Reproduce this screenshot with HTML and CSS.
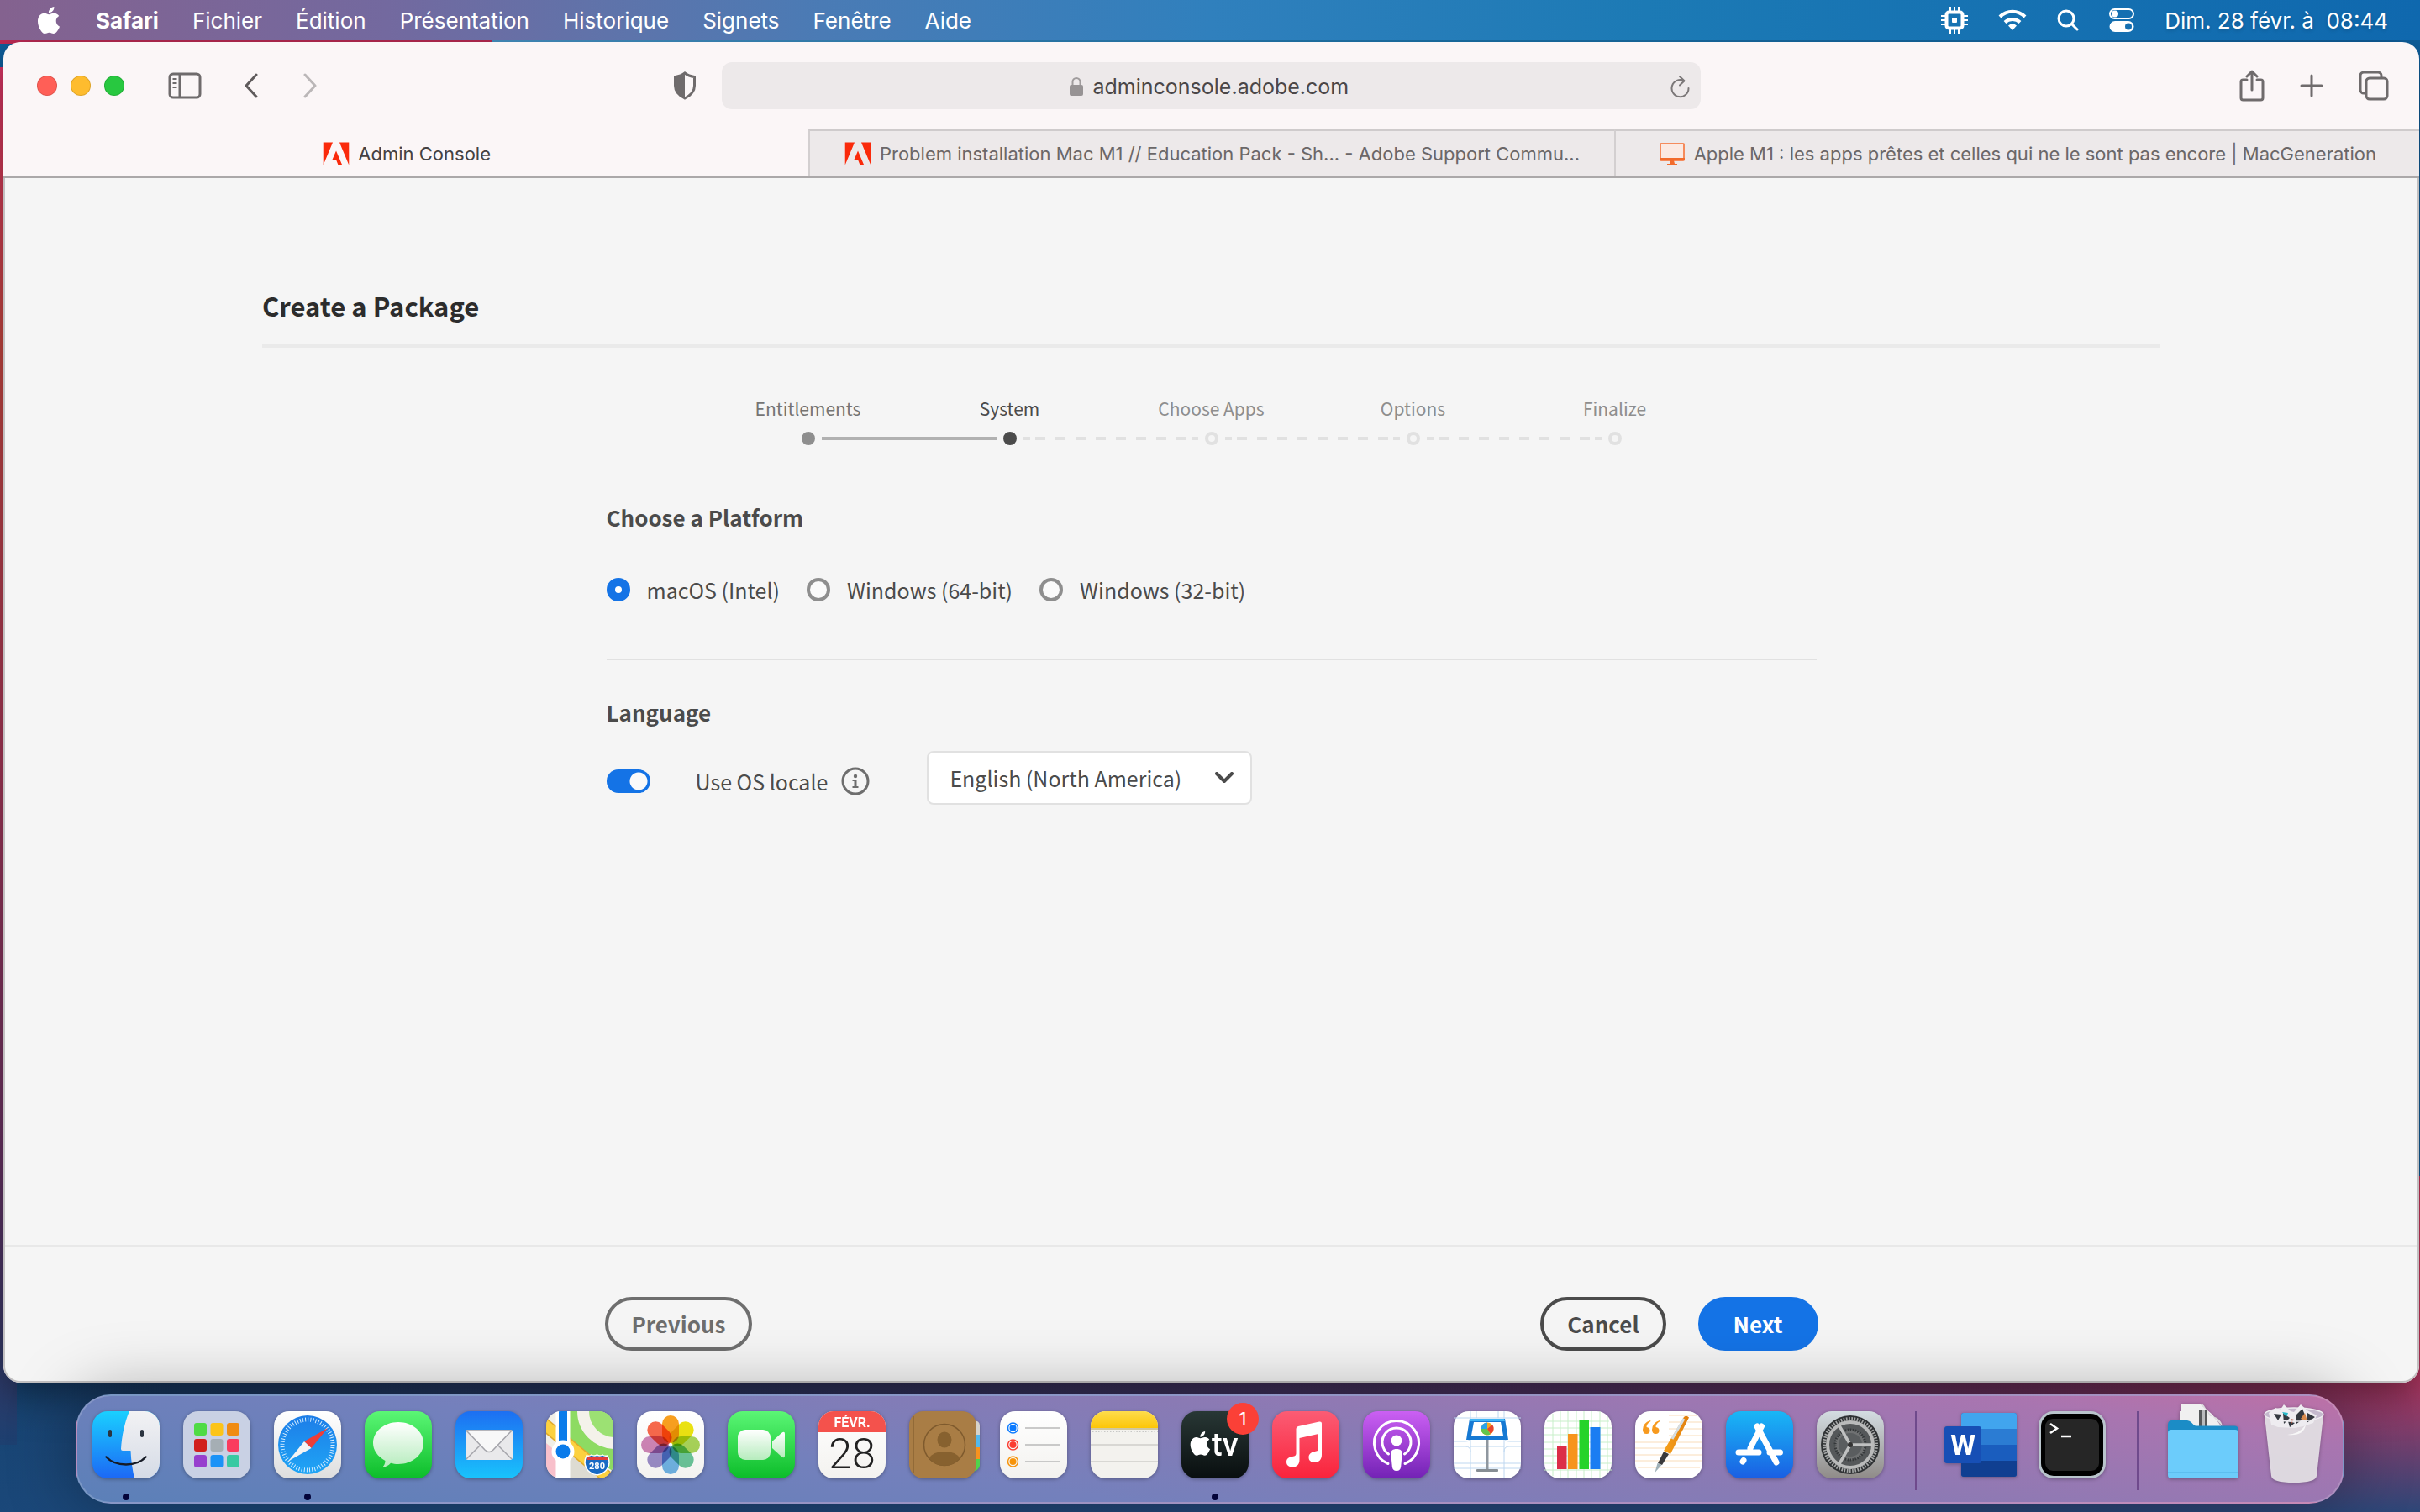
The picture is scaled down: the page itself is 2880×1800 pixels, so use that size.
FILE: index.html
```html
<!DOCTYPE html>
<html lang="fr">
<head>
    <meta charset="UTF-8">
    <meta name="viewport" content="width=device-width, initial-scale=1.0">
    <title>Admin Console</title>
    <link rel="stylesheet" href="styles.css">
</head>
<body>
    <!-- menu bar -->
    <header class="menubar">
        <nav class="menus">
            <svg class="apple" viewBox="0 0 24 24"><path d="M12.152 6.896c-.948 0-2.415-1.078-3.96-1.04-2.04.027-3.91 1.183-4.961 3.014-2.117 3.675-.546 9.103 1.519 12.09 1.013 1.454 2.208 3.09 3.792 3.039 1.52-.065 2.09-.987 3.935-.987 1.831 0 2.35.987 3.96.948 1.637-.026 2.676-1.48 3.676-2.948 1.156-1.688 1.636-3.325 1.662-3.415-.039-.013-3.182-1.221-3.22-4.857-.026-3.04 2.48-4.494 2.597-4.559-1.429-2.09-3.623-2.324-4.39-2.376-2-.156-3.675 1.09-4.61 1.09zM15.53 3.83c.843-1.012 1.4-2.427 1.245-3.83-1.207.052-2.662.805-3.532 1.818-.78.896-1.454 2.338-1.273 3.714 1.338.104 2.715-.688 3.559-1.701"/></svg>
            <button class="menu app-name">Safari</button>
            <button class="menu">Fichier</button>
            <button class="menu">Édition</button>
            <button class="menu">Présentation</button>
            <button class="menu">Historique</button>
            <button class="menu">Signets</button>
            <button class="menu">Fenêtre</button>
            <button class="menu">Aide</button>
        </nav>
        <div class="status">
            <svg width="32" height="32" viewBox="0 0 32 32" fill="none" stroke="#fff"><rect x="6.500" y="6.500" width="19" height="19" rx="3" stroke-width="4"/><path d="M11 0v5M16 0v5M21 0v5M11 27v5M16 27v5M21 27v5M0 11h5M0 16h5M0 21h5M27 11h5M27 16h5M27 21h5" stroke-width="2"/><rect x="13" y="13" width="6" height="6" rx="1" fill="#fff" stroke="none"/></svg>
            <svg width="34" height="26" viewBox="0 0 34 26" fill="none" stroke="#fff" stroke-width="4"><path d="M2 9a21 21 0 0 1 30 0M8 15.500a13 13 0 0 1 18 0"/><path d="M17 25l-5-5.500a7 7 0 0 1 10 0z" fill="#fff" stroke="none"/></svg>
            <svg width="26" height="26" viewBox="0 0 26 26" fill="none" stroke="#fff" stroke-width="3" stroke-linecap="round"><circle cx="11" cy="11" r="9"/><path d="M18 18l6 6"/></svg>
            <svg width="30" height="28" viewBox="0 0 30 28"><rect x="1" y="1" width="28" height="11" rx="5.500" fill="none" stroke="#fff" stroke-width="2"/><circle cx="7" cy="6.500" r="4" fill="#fff"/><path d="M7 15h16a6.500 6.500 0 0 1 0 13H7a6.500 6.500 0 0 1 0-13zm16 2.500a4 4 0 1 0 0 8 4 4 0 0 0 0-8z" fill="#fff" fill-rule="evenodd"/></svg>
            <time>Dim. 28 févr. à&nbsp; 08:44</time>
        </div>
    </header>

    <!-- browser window -->
    <main class="window">
        <div class="toolbar">
            <div class="tools tools-left">
                <div class="lights">
                    <button class="light close" aria-label="Fermer"></button>
                    <button class="light minimize" aria-label="Réduire"></button>
                    <button class="light zoom" aria-label="Agrandir"></button>
                </div>
                <button class="tool sidebar" aria-label="Barre latérale"><svg width="40" height="32" viewBox="0 0 40 32" fill="none" stroke="#6f6b6c" stroke-width="3"><rect x="2" y="2" width="36" height="28" rx="4"/><path d="M14 2v28"/><path d="M5.500 8h5M5.500 13h5M5.500 18h5" stroke-width="2"/></svg></button>
                <button class="tool" aria-label="Précédent"><svg width="18" height="30" viewBox="0 0 18 30" fill="none" stroke="#5f5b5c" stroke-width="3" stroke-linecap="round" stroke-linejoin="round"><path d="M15 2L3 15l12 13"/></svg></button>
                <button class="tool forward" aria-label="Suivant"><svg width="18" height="30" viewBox="0 0 18 30" fill="none" stroke="#bbb7b8" stroke-width="3" stroke-linecap="round" stroke-linejoin="round"><path d="M3 2l12 13L3 28"/></svg></button>
                <button class="tool shield" aria-label="Confidentialité"><svg width="28" height="34" viewBox="0 0 28 34"><path d="M14 2c3 2.500 7 4 11.500 4.500V17c0 6.500-4.500 11.500-11.500 15C7 28.500 2.500 23.500 2.500 17V6.500C7 6 11 4.500 14 2z" fill="none" stroke="#6f6b6c" stroke-width="3"/><path d="M14 2v30C7 28.500 2.500 23.500 2.500 17V6.500C7 6 11 4.500 14 2z" fill="#6f6b6c"/></svg></button>
            </div>
            <div class="address">
                <svg width="16" height="24" viewBox="0 0 16 24"><path d="M3.500 11V6.500a4.500 4.500 0 0 1 9 0V11" fill="none" stroke="#a09c9d" stroke-width="2"/><rect y="10" width="16" height="13" rx="2" fill="#979394"/></svg>
                <input class="url" type="text" value="adminconsole.adobe.com" aria-label="Adresse">
                <button class="tool reload" aria-label="Recharger"><svg width="24" height="28" viewBox="0 0 24 28" fill="none" stroke="#7c7879" stroke-width="2" stroke-linecap="round" stroke-linejoin="round"><path d="M16 7.200A10 10 0 1 0 21.500 16"/><path d="M11 2l5.500 5.200L11 12.500"/></svg></button>
            </div>
            <div class="tools tools-right">
                <button class="tool" aria-label="Partager"><svg width="30" height="38" viewBox="0 0 30 38" fill="none" stroke="#6f6b6c" stroke-width="3" stroke-linecap="round" stroke-linejoin="round"><path d="M9 12H4.500A2.500 2.500 0 0 0 2 14.500v19A2.500 2.500 0 0 0 4.500 36h21a2.500 2.500 0 0 0 2.500-2.500v-19a2.500 2.500 0 0 0-2.500-2.500H21M15 24V2M9 8l6-6 6 6"/></svg></button>
                <button class="tool" aria-label="Nouvel onglet"><svg width="28" height="28" viewBox="0 0 28 28" fill="none" stroke="#6f6b6c" stroke-width="3" stroke-linecap="round"><path d="M14 2v24M2 14h24"/></svg></button>
                <button class="tool" aria-label="Aperçu des onglets"><svg width="36" height="36" viewBox="0 0 36 36" fill="none" stroke="#6f6b6c" stroke-width="3"><path d="M9 27H6a4 4 0 0 1-4-4V6a4 4 0 0 1 4-4h17a4 4 0 0 1 4 4v3"/><rect x="9" y="9" width="25" height="25" rx="4"/></svg></button>
            </div>
        </div>

        <nav class="tabs">
            <a class="tab active" href="#"><svg class="favicon" viewBox="0 1 24 22"><path fill="#fa2a0b" d="M13.966 22.624l-1.690-4.281H8.122l3.892-9.144 5.662 13.425zM8.884 1.376H0v21.248zm6.232 0H24v21.248z"/></svg>Admin Console</a>
            <a class="tab" href="#"><svg class="favicon" viewBox="0 1 24 22"><path fill="#fa2a0b" d="M13.966 22.624l-1.690-4.281H8.122l3.892-9.144 5.662 13.425zM8.884 1.376H0v21.248zm6.232 0H24v21.248z"/></svg>Problem installation Mac M1 // Education Pack - Sh... - Adobe Support Commu...</a>
            <a class="tab" href="#"><svg class="favicon" viewBox="0 0 32 28"><rect x="2" y="2" width="28" height="20" rx="1" fill="#fbe9e2" stroke="#f58b5c" stroke-width="2"/><path d="M1 19h30v3H1zM14 22h4l1 4h3v1H10v-1h3z" fill="#f26b2c"/></svg>Apple M1 : les apps prêtes et celles qui ne le sont pas encore | MacGeneration</a>
        </nav>

        <form class="page" lang="en">
            <div class="content">
                <h1>Create a Package</h1>
                <div class="wizard">
                    <ol class="steps">
                        <li class="done">Entitlements</li>
                        <li class="current">System</li>
                        <li>Choose Apps</li>
                        <li>Options</li>
                        <li>Finalize</li>
                    </ol>
                    <div class="track">
                        <i class="dot done"></i><i class="line done"></i>
                        <i class="dot current"></i><i class="line"></i>
                        <i class="dot"></i><i class="line"></i>
                        <i class="dot"></i><i class="line"></i>
                        <i class="dot"></i>
                    </div>

                    <h2>Choose a Platform</h2>
                    <div class="platforms">
                        <label><input type="radio" name="platform" checked>macOS (Intel)</label>
                        <label><input type="radio" name="platform">Windows (64-bit)</label>
                        <label><input type="radio" name="platform">Windows (32-bit)</label>
                    </div>

                    <h2>Language</h2>
                    <div class="language">
                        <label class="locale"><input class="switch" type="checkbox" checked>Use OS locale</label>
                        <svg class="info" width="34" height="34" viewBox="0 0 34 34"><circle cx="17" cy="17" r="15" fill="none" stroke="#6e6e6e" stroke-width="3"/><circle cx="17" cy="11" r="2.200" fill="#6e6e6e"/><path d="M13.500 15h5v8h2v2h-7v-2h2v-6h-2z" fill="#6e6e6e"/></svg>
                        <div class="picker">
                            <select aria-label="Language">
                                <option>English (North America)</option>
                            </select>
                            <svg width="22" height="14" viewBox="0 0 22 14" fill="none" stroke="#4b4b4b" stroke-width="4" stroke-linecap="round" stroke-linejoin="round"><path d="M2 2l9 9 9-9"/></svg>
                        </div>
                    </div>
                </div>
            </div>
            <div class="footer">
                <div class="actions">
                    <button type="button" class="btn previous">Previous</button>
                    <button type="button" class="btn cancel">Cancel</button>
                    <button type="button" class="btn next">Next</button>
                </div>
            </div>
        </form>
    </main>

    <!-- dock -->
    <footer class="dock-area">
        <svg class="defs" width="0" height="0">
            <defs>
                <linearGradient id="gFinder" x2="0" y2="1"><stop stop-color="#1ad0ff"/><stop offset="1" stop-color="#1c68f5"/></linearGradient>
                <linearGradient id="gFace" x2="0" y2="1"><stop stop-color="#f2f2f4"/><stop offset="1" stop-color="#d5dbe6"/></linearGradient>
                <linearGradient id="gWhite" x2="0" y2="1"><stop stop-color="#fff"/><stop offset="1" stop-color="#dedede"/></linearGradient>
                <linearGradient id="gPaper" x2="0" y2="1"><stop stop-color="#fff"/><stop offset="1" stop-color="#f3f2ef"/></linearGradient>
                <linearGradient id="gGreen" x2="0" y2="1"><stop stop-color="#5bf675"/><stop offset="1" stop-color="#0cbd2a"/></linearGradient>
                <linearGradient id="gMail" x2="0" y2="1"><stop stop-color="#1d6ff2"/><stop offset="1" stop-color="#19c3fc"/></linearGradient>
                <linearGradient id="gCompass" x2="0" y2="1"><stop stop-color="#1d7de8"/><stop offset="1" stop-color="#1fa5f5"/></linearGradient>
                <linearGradient id="gNotes" x2="0" y2="1"><stop stop-color="#fedc4c"/><stop offset="1" stop-color="#fcc608"/></linearGradient>
                <linearGradient id="gTv" x2="0" y2="1"><stop stop-color="#283735"/><stop offset="1" stop-color="#090e0f"/></linearGradient>
                <linearGradient id="gMusic" x2="0" y2="1"><stop stop-color="#fb5c74"/><stop offset="1" stop-color="#fa233b"/></linearGradient>
                <linearGradient id="gPod" x2="0" y2="1"><stop stop-color="#cb60f3"/><stop offset="1" stop-color="#7322b5"/></linearGradient>
                <linearGradient id="gStore" x2="0" y2="1"><stop stop-color="#19b7f6"/><stop offset="1" stop-color="#1a5fe3"/></linearGradient>
                <linearGradient id="gPrefs" x2="0" y2="1"><stop stop-color="#d3dce1"/><stop offset="1" stop-color="#8f8b88"/></linearGradient>
                <linearGradient id="gGlass" x2="0" y2="1"><stop stop-color="#fff"/><stop offset="1" stop-color="#b6ecbd"/></linearGradient>
                <linearGradient id="gPen" x2="1" y2="0"><stop stop-color="#f7a21c"/><stop offset="1" stop-color="#e07d0c"/></linearGradient>
                <clipPath id="tile"><rect width="80" height="80" rx="18"/></clipPath>
            </defs>
        </svg>
        <div class="dock">
            <a class="app running" href="#" aria-label="Finder"><svg viewBox="0 0 80 80"><g clip-path="url(#tile)"><rect width="80" height="80" fill="url(#gFinder)"/><path d="M44 0C38 14 35 30 34 45q0 2 2 2h9.500C46 60 48 71 50 80h30V0z" fill="url(#gFace)"/></g><path d="M21 24v5M59 24v5" stroke="#2b3440" stroke-width="4" stroke-linecap="round"/><path d="M16.500 54.500c11 12 36 12 47 0" fill="none" stroke="#161b26" stroke-width="2.500" stroke-linecap="round"/></svg></a>
            <a class="app" href="#" aria-label="Launchpad"><svg viewBox="0 0 80 80"><rect width="80" height="80" rx="18" fill="#c9d1e4"/><g><rect x="13" y="14" width="15" height="15" rx="3" fill="#4fdb45"/><rect x="32.500" y="14" width="15" height="15" rx="3" fill="#fcc419"/><rect x="52" y="14" width="15" height="15" rx="3" fill="#f08c13"/><rect x="13" y="33" width="15" height="15" rx="3" fill="#d11f1d"/><rect x="32.500" y="33" width="15" height="15" rx="3" fill="#a5aeb4"/><rect x="52" y="33" width="15" height="15" rx="3" fill="#fa3b5e"/><rect x="13" y="52" width="15" height="15" rx="3" fill="#973fce"/><rect x="32.500" y="52" width="15" height="15" rx="3" fill="#1b92f7"/><rect x="52" y="52" width="15" height="15" rx="3" fill="#38c9a2"/></g></svg></a>
            <a class="app running" href="#" aria-label="Safari"><svg viewBox="0 0 80 80"><rect width="80" height="80" rx="18" fill="url(#gWhite)"/><circle cx="40" cy="40" r="35" fill="url(#gCompass)"/><circle cx="40" cy="40" r="30" fill="none" stroke="#d6edff" stroke-width="5" stroke-dasharray="1 2.142"/><path d="M64 20L44.500 44 36 36z" fill="#ee3d38"/><path d="M17 59.500L36 36l8.500 8z" fill="#f4f4f4"/></svg></a>
            <a class="app" href="#" aria-label="Messages"><svg viewBox="0 0 80 80"><rect width="80" height="80" rx="18" fill="url(#gGreen)"/><path d="M40 13c16.600 0 30 11 30 25S56.600 63 40 63c-3.500 0-6-.3-9-1.200-2.500 2.700-6 4.700-10 5.200 2-2 3.500-5 3.500-8C15.500 54 10 46.500 10 38c0-14 13.400-25 30-25z" fill="url(#gGlass)"/></svg></a>
            <a class="app" href="#" aria-label="Mail"><svg viewBox="0 0 80 80"><rect width="80" height="80" rx="18" fill="url(#gMail)"/><rect x="12" y="22" width="56" height="36" rx="3" fill="#e9e9eb"/><path d="M13 57l19-19M67 57L48 38" stroke="#a4a4aa" stroke-width="1.500"/><path d="M13 23l22 23q5 5 10 0l22-23z" fill="#f8f8f8" stroke="#a4a4aa" stroke-width="1.500" stroke-linejoin="round"/></svg></a>
            <a class="app" href="#" aria-label="Plans"><svg viewBox="0 0 80 80"><g clip-path="url(#tile)"><rect width="80" height="80" fill="#f1efe7"/><path d="M28 0h52v72L28 34z" fill="#8ddb62"/><circle cx="82" cy="0" r="38" fill="#9ce173" stroke="#f4f2ea" stroke-width="14"/><path d="M28 50l34 30H28z" fill="#dddbd2"/><path d="M0 38l12 10v32H0z" fill="#f8c0cb"/><path d="M-4 14L84 88" stroke="#e0a92a" stroke-width="15"/><path d="M-4 14L84 88" stroke="#fcd13f" stroke-width="12"/><path d="M20 0v80" stroke="#fff" stroke-width="17"/><path d="M20 0v48" stroke="#0a7bea" stroke-width="10"/><circle cx="20" cy="48" r="11" fill="#0a7bea" stroke="#fff" stroke-width="5"/><path d="M48 53q3 1 6-1 3 2 6.500 0 3.500 2 6.500 0 3 2 6 1 4 8 0 15-3 6-12.500 8Q51 74 48 68q-4-7 0-15z" fill="#186ac4" stroke="#fff" stroke-width="1.500"/><path d="M49 54h23l1.500 4h-26z" fill="#e23c3a"/></g><text x="60.500" y="69" text-anchor="middle" class="shield-text">280</text></svg></a>
            <a class="app" href="#" aria-label="Photos"><svg viewBox="0 0 80 80"><rect width="80" height="80" rx="18" fill="url(#gPaper)"/><g class="petals"><rect x="30" y="5" width="20" height="33" rx="10" fill="#f9a01f"/><rect x="30" y="5" width="20" height="33" rx="10" fill="#ece411" transform="rotate(45 40 40)"/><rect x="30" y="5" width="20" height="33" rx="10" fill="#a9d55a" transform="rotate(90 40 40)"/><rect x="30" y="5" width="20" height="33" rx="10" fill="#6cc79c" transform="rotate(135 40 40)"/><rect x="30" y="5" width="20" height="33" rx="10" fill="#71b5e8" transform="rotate(180 40 40)"/><rect x="30" y="5" width="20" height="33" rx="10" fill="#9c8ecb" transform="rotate(225 40 40)"/><rect x="30" y="5" width="20" height="33" rx="10" fill="#cf86b8" transform="rotate(270 40 40)"/><rect x="30" y="5" width="20" height="33" rx="10" fill="#f8694c" transform="rotate(315 40 40)"/></g></svg></a>
            <a class="app" href="#" aria-label="FaceTime"><svg viewBox="0 0 80 80"><rect width="80" height="80" rx="18" fill="url(#gGreen)"/><rect x="12" y="22" width="39" height="36" rx="9" fill="url(#gGlass)"/><path d="M53 36l11-10q4-3 4 1v26q0 4-4 1L53 44z" fill="url(#gGlass)"/></svg></a>
            <a class="app" href="#" aria-label="Calendrier"><svg viewBox="0 0 80 80"><g clip-path="url(#tile)"><rect width="80" height="80" fill="url(#gPaper)"/><rect width="80" height="25" fill="#f4524c"/></g><text x="40" y="19" text-anchor="middle" class="cal-month">FÉVR.</text><text x="40" y="68" text-anchor="middle" class="cal-day">28</text></svg></a>
            <a class="app" href="#" aria-label="Contacts"><svg viewBox="0 0 80 80"><path d="M76 11q8 0 8 6v11h-8z" fill="#d6d3cb"/><path d="M76 28h8v15h-8z" fill="#52b9ee"/><path d="M76 43h8v14h-8z" fill="#f7931e"/><path d="M76 57h8v8q-1 5-8 7z" fill="#4fd44c"/><rect width="80" height="80" rx="17" fill="#a97d45"/><path d="M5 6v68" stroke="#8b6533" stroke-width="1.500"/><g fill="none" stroke="#7e5a2d" stroke-width="1.500"><circle cx="42" cy="40" r="24.500"/></g><ellipse cx="42" cy="34" rx="8.500" ry="9.500" fill="#87612f"/><path d="M24 56q4-8 18-8t18 8q-7 9-18 9t-18-9z" fill="#87612f"/></svg></a>
            <a class="app" href="#" aria-label="Rappels"><svg viewBox="0 0 80 80"><rect width="80" height="80" rx="18" fill="url(#gPaper)"/><g fill="none" stroke-width="1.500"><circle cx="15.500" cy="20" r="6" stroke="#0a7aff"/><circle cx="15.500" cy="40" r="6" stroke="#fb3b30"/><circle cx="15.500" cy="60" r="6" stroke="#f7940b"/></g><circle cx="15.500" cy="20" r="4" fill="#0a7aff"/><circle cx="15.500" cy="40" r="4" fill="#fb3b30"/><circle cx="15.500" cy="60" r="4" fill="#f7940b"/><path d="M30 20h42M30 40h42M30 60h42" stroke="#b9b9b9" stroke-width="1.500"/></svg></a>
            <a class="app" href="#" aria-label="Notes"><svg viewBox="0 0 80 80"><g clip-path="url(#tile)"><rect width="80" height="80" fill="#f3f2ee"/><rect width="80" height="20" fill="url(#gNotes)"/><path d="M0 21h80" stroke="#c3b888" stroke-width="1.500"/><path d="M2 24h78" stroke="#bbb" stroke-width="1.500" stroke-dasharray="1.500 2"/><path d="M0 40h80M0 60h80" stroke="#cfceca" stroke-width="1.500"/></g></svg></a>
            <a class="app running" href="#" aria-label="TV"><svg viewBox="0 0 80 80"><rect width="80" height="80" rx="18" fill="url(#gTv)"/><g transform="translate(8 24) scale(1.200)"><path fill="#fff" d="M12.152 6.896c-.948 0-2.415-1.078-3.960-1.040-2.040.027-3.910 1.183-4.961 3.014-2.117 3.675-.546 9.103 1.519 12.090 1.013 1.454 2.208 3.090 3.792 3.039 1.520-.065 2.090-.987 3.935-.987 1.831 0 2.350.987 3.960.948 1.637-.026 2.676-1.480 3.676-2.948 1.156-1.688 1.636-3.325 1.662-3.415-.039-.013-3.182-1.221-3.220-4.857-.026-3.040 2.480-4.494 2.597-4.559-1.429-2.090-3.623-2.324-4.390-2.376-2-.156-3.675 1.090-4.610 1.090zM15.530 3.830c.843-1.012 1.400-2.427 1.245-3.830-1.207.052-2.662.805-3.532 1.818-.78.896-1.454 2.338-1.273 3.714 1.338.104 2.715-.688 3.559-1.701"/></g><text x="36" y="53" class="tv-text">tv</text></svg><span class="badge">1</span></a>
            <a class="app" href="#" aria-label="Musique"><svg viewBox="0 0 80 80"><rect width="80" height="80" rx="18" fill="url(#gMusic)"/><path d="M28.500 21q0-2.500 2.500-3l25-5.500q3-.5 3 2V52c0 5-3 9-8.500 9-4.500 0-7-2.500-7-6 0-4 3-6.500 7-7 3.500-.5 4.500-1 4.500-4V27l-22.500 5v26c0 5-3 8.500-8.500 8.500-4.500 0-7-2.500-7-6 0-4 3-6 7-6.500 3.500-.5 4.500-1.500 4.500-4z" fill="#fff"/></svg></a>
            <a class="app" href="#" aria-label="Podcasts"><svg viewBox="0 0 80 80"><rect width="80" height="80" rx="18" fill="url(#gPod)"/><g fill="none" stroke="#fff" stroke-width="3" stroke-linecap="round"><path d="M30 62.500a26.500 26.500 0 1 1 20 0"/><path d="M30.500 51a17 17 0 1 1 19 0"/></g><circle cx="40" cy="35" r="6.500" fill="#fff"/><path d="M40 45c4.500 0 7 2 6.700 6l-1.500 15c-.4 3.500-2 5-5.200 5s-4.800-1.500-5.200-5l-1.500-15c-.3-4 2.200-6 6.700-6z" fill="#fff"/></svg></a>
            <a class="app" href="#" aria-label="Keynote"><svg viewBox="0 0 80 80"><rect width="80" height="80" rx="18" fill="#fff"/><g fill="none" stroke="#bed7f0"><path d="M20 0v80M27 0v8M53 0v8M60 0v80M0 8h80M0 36h14q6 0 6-6M0 42h14q6 0 6 6M80 36H66q-6 0-6-6M80 42H66q-6 0-6 6M0 62h20M60 62h20M20 42h40M20 62h40M0 68h80"/></g><path d="M40 34v36" stroke="#8f979f" stroke-width="3"/><rect x="27" y="69" width="26" height="3" rx="1" fill="#868d93"/><path d="M19 9h42l4 25H15z" fill="#1679d3"/><path d="M20 9h40l1 3H19z" fill="#40b4f5"/><path d="M24 13h32l3 16H21z" fill="#fff"/><circle cx="40" cy="21" r="7.500" fill="#f6a821"/><path d="M40 21V13.500a7.500 7.500 0 0 0-7.500 7.500z" fill="#2ba3e8"/><path d="M40 21h-7.500a7.500 7.500 0 0 0 11 6.500z" fill="#62c64c"/><path d="M40 21l6-5a7.500 7.500 0 0 1-2 11z" fill="#e8452c"/></svg></a>
            <a class="app" href="#" aria-label="Numbers"><svg viewBox="0 0 80 80"><rect width="80" height="80" rx="18" fill="#fff"/><path d="M10 3v74M19 0v80M28 0v80M38 0v80M47 0v80M56 0v80M66 0v80M75 6v68M3 12h74M0 20h80M0 28h80M0 37h80M0 45h80M0 53h80M0 62h80M0 70h80" stroke="#c8efc9"/><rect x="15" y="42" width="11.500" height="27" fill="#dc2e48"/><rect x="28" y="27" width="11.500" height="42" fill="#f7941d"/><rect x="41.500" y="10" width="11.500" height="59" fill="#25d32a"/><rect x="54.500" y="19" width="12" height="50" fill="#1b7df2"/></svg></a>
            <a class="app" href="#" aria-label="Pages"><svg viewBox="0 0 80 80"><rect width="80" height="80" rx="18" fill="#fff"/><path d="M40 5h34M40 13h39M40 21h40M40 29h40M0 37h80M0 44h80M0 52h80M0 59h80M3 67h74" stroke="#f9dcb9"/><path d="M18 11q-9 3-9 11 0 5 4.500 5 4 0 4-4 0-3.500-4-4 0-4 5-7zM29 11q-9 3-9 11 0 5 4.500 5 4 0 4-4 0-3.500-4-4 0-4 5-7z" fill="#f79a1e"/><path d="M58 7q3-2.500 6 .5L42 51l-8-4z" fill="url(#gPen)"/><path d="M58 9L44 33" stroke="#d5dde2" stroke-width="3"/><path d="M34 48l6 3-8 13-5-2z" fill="#3a3a3c"/><path d="M26.500 62l5 2-8 9z" fill="#9fb0b7"/></svg></a>
            <a class="app" href="#" aria-label="App Store"><svg viewBox="0 0 80 80"><rect width="80" height="80" rx="18" fill="url(#gStore)"/><g fill="none" stroke="#fff" stroke-width="7" stroke-linecap="round"><path d="M42.500 18L29 44M37 18l23 43M15 49h24M52 49h12.500M21 58.500l-1 1.500"/></g></svg></a>
            <a class="app" href="#" aria-label="Préférences Système"><svg viewBox="0 0 80 80"><rect width="80" height="80" rx="18" fill="url(#gPrefs)"/><circle cx="40" cy="40" r="35" fill="#2f3234"/><circle cx="40" cy="40" r="31" fill="none" stroke="#a6a8a8" stroke-width="4" stroke-dasharray="1.600 1.600"/><circle cx="40" cy="40" r="27" fill="#55585a" stroke="#b9baba" stroke-width="4"/><circle cx="40" cy="40" r="18" fill="#6f7172" stroke="#35383a" stroke-width="3" stroke-dasharray="1.500 1.500"/><circle cx="40" cy="40" r="14" fill="#5a5d5f"/><path d="M40 40h26M40 40L27 17.500M40 40L27 62.500" stroke="#c0c1c1" stroke-width="3.500"/><circle cx="40" cy="40" r="3" fill="#333"/></svg></a>
            <span class="divider"></span>
            <a class="app" href="#" aria-label="Word"><svg viewBox="0 0 80 80"><rect x="16" y="2" width="66" height="76" rx="3" fill="#1a5dbe"/><path d="M16 21V5q0-3 3-3h60q3 0 3 3v16z" fill="#41a5ee"/><path d="M16 21h66v19H16z" fill="#2b7cd3"/><path d="M16 59h66v16q0 3-3 3H19q-3 0-3-3z" fill="#103f91"/><rect x="-4" y="18" width="44" height="44" rx="3" fill="#174fb5"/><text x="18" y="52" text-anchor="middle" class="word-text">W</text></svg></a>
            <a class="app" href="#" aria-label="Terminal"><svg viewBox="0 0 80 80"><rect width="80" height="80" rx="18" fill="#b9c4cc"/><rect x="3" y="3" width="74" height="74" rx="15" fill="#000"/><rect x="8" y="9" width="64" height="62" rx="9" fill="#262626"/><path d="M14 15l8 5.500-8 5.500M27 30h12" fill="none" stroke="#fff" stroke-width="2.500"/></svg></a>
            <span class="divider"></span>
            <a class="app" href="#" aria-label="Téléchargements"><svg viewBox="0 0 80 80"><path d="M14-9h22L51 4l12 16v10H12V0h2z" fill="#f0f0f0"/><path d="M36-9q4 0 6 4l6 11q12 0 15 12z" fill="#dcdcde"/><path d="M35-1h10v20H35z" fill="#55585a"/><path d="M38-1h4v20h-4z" fill="#b9bbbd"/><path d="M-2 16q0-5 5-5h18q3 0 5 2.500l3 3q1 1 3 1h45q5 0 5 5v10H-2z" fill="#1b8cc6"/><rect x="-2" y="22" width="84" height="58" rx="4" fill="#6cccfb"/><path d="M-2 73h84" stroke="#4fb0e2"/></svg></a>
            <a class="app" href="#" aria-label="Corbeille"><svg viewBox="0 0 80 80"><ellipse cx="40" cy="4" rx="35" ry="8" fill="#c4b9cd"/><path d="M5 5q8 8 35 8t35-8l-8 72q-1 8-27 8t-27-8z" fill="#e5e2e6" fill-opacity=".93"/><path d="M10 2l8-6 6 2 4-6 8 8 4 1 8-9 8 7 11 6-4 9-12 4-10 2-20-1-8-3z" fill="#eeecf0"/><path d="M16 3l9 1-4 7zM27 2l8 6-7 7zM43 4l7-7 4 10-11 8zM56 2l9 5-10 7zM33 12l8 2-6 5z" fill="#34383f"/><path d="M26 1l7 1-2 5z" fill="#27b9c9"/><path d="M48 9l5-7 3 10z" fill="#d98a4c"/><path d="M36 9l4 1-3 5z" fill="#b0533c"/><path d="M32 28q15-1 22-12-2 14-22 12z" fill="#f7f7f7"/><ellipse cx="40" cy="4" rx="35" ry="8" fill="none" stroke="#efedf1" stroke-width="1.500"/></svg></a>
        </div>
    </footer>
</body>
</html>
```

FILE: styles.css
```css
* {
    box-sizing: border-box;
}
body {
    margin: 0;
    min-height: 100vh;
    display: flex;
    flex-direction: column;
    font-family: Inter, "Liberation Sans", sans-serif;
    background:
        linear-gradient(to right, #c42c58 585px, #4b9bd0 585px, #1c7ab5 60%, #0f62a2) top / 100% 52px no-repeat,
        linear-gradient(to bottom, #e4386b, #d04a44 20%, #b03a5c 50%, #6a3468 80%, #1d4070) left / 20px calc(100% - 160px) no-repeat,
        linear-gradient(to bottom, rgba(22, 68, 112, 0), rgba(27, 72, 122, 0.9)) bottom / 100% 200px no-repeat,
        linear-gradient(to right, #164370, #3a3768 30%, #70346c 65%, #9c3062 85%, #d8345e) bottom / 100% 400px no-repeat,
        #0f62a2;
}
button,
input,
select {
    font: inherit;
    color: inherit;
    margin: 0;
}
button {
    border: none;
    background: none;
    padding: 0;
}
svg {
    display: block;
    flex: none;
}
a {
    color: inherit;
    text-decoration: none;
}

/* menu bar */
.menubar {
    height: 48px;
    padding: 0 38px 0 42px;
    display: flex;
    justify-content: space-between;
    align-items: center;
    color: #fff;
    font-size: 26px;
    text-shadow: 0 2px 4px rgba(0, 0, 0, 0.2);
    background: linear-gradient(to right, #84628f, #73699f 16%, #5d74ab 26%, #4a7bb5 34%, #3080bd 50%, #1c7ab5 68%, #0f68ae);
}
.menus,
.status {
    display: flex;
    align-items: center;
}
.menus {
    gap: 40px;
}
.apple {
    width: 32px;
    height: 32px;
    fill: #fff;
}
.app-name {
    font-weight: 700;
}
.status {
    gap: 36px;
}

/* browser window */
.window {
    flex: 1;
    margin: 2px 1px 0 4px;
    display: flex;
    flex-direction: column;
    border-radius: 20px;
    overflow: hidden;
    background: #fbf6f7;
    box-shadow: 0 12px 50px rgba(0, 0, 0, 0.5);
}
.menubar {
    position: relative;
}
.toolbar {
    height: 104px;
    display: grid;
    grid-template-columns: 1fr 40.5% 1fr;
    align-items: center;
}
.tools {
    display: flex;
    align-items: center;
}
.tools-left {
    padding: 0 30px 0 40px;
}
.tools-right {
    justify-content: flex-end;
    gap: 42px;
    padding-right: 36px;
}
.lights {
    display: flex;
    gap: 16px;
}
.light {
    width: 24px;
    height: 24px;
    border-radius: 50%;
    border: 1px solid rgba(0, 0, 0, 0.12);
}
.close {
    background: #ff5f57;
}
.minimize {
    background: #febc2e;
}
.zoom {
    background: #28c840;
}
.sidebar {
    margin: 0 50px 0 52px;
}
.forward {
    margin-left: 52px;
}
.shield {
    margin-left: auto;
}
.address {
    height: 56px;
    padding-top: 2px;
    display: flex;
    justify-content: center;
    align-items: center;
    gap: 12px;
    position: relative;
    border-radius: 12px;
    background: #ede9ea;
    color: #4b4748;
}
.url {
    width: 310px;
    padding: 0;
    border: none;
    outline: none;
    background: none;
    font-size: 25px;
}
.reload {
    position: absolute;
    right: 12px;
}

.tabs {
    height: 58px;
    display: grid;
    grid-template-columns: repeat(3, 1fr);
    border-bottom: 2px solid #aba8a9;
}
.tab {
    display: flex;
    justify-content: center;
    align-items: center;
    gap: 10px;
    min-width: 0;
    white-space: nowrap;
    font-size: 22px;
    color: #6b6768;
    background: #ede9ea;
    border-top: 2px solid #cfcbcc;
    border-left: 2px solid #d3cfd0;
}
.tab.active {
    color: #454142;
    background: none;
    border-color: transparent;
}
.favicon {
    width: 32px;
    height: 28px;
}

/* page */
.page {
    flex: 1;
    display: flex;
    flex-direction: column;
    border: 2px solid #c2c0c1;
    border-top: none;
    border-radius: 0 0 20px 20px;
    background: #f5f5f5;
    color: #4b4b4b;
    font-family: "Noto Sans CJK SC", "Noto Sans", sans-serif;
    font-size: 25px;
    line-height: 36px;
}
.content {
    flex: 1;
    padding: 130px 306px 0;
}
h1 {
    margin: 0;
    padding-bottom: 24px;
    border-bottom: 4px solid #eaeaea;
    font-size: 31px;
    line-height: 44px;
    color: #2c2c2c;
}
h2 {
    margin: 0;
    font-size: 26px;
    line-height: 40px;
}
.wizard {
    max-width: 1440px;
    margin: 0 auto;
    padding-top: 56px;
}
.steps {
    display: grid;
    grid-template-columns: repeat(5, 1fr);
    margin: 0 120px;
    padding: 0;
    list-style: none;
    text-align: center;
    font-size: 21px;
    line-height: 32px;
    color: #8e8e8e;
}
.steps .done {
    color: #747474;
}
.steps .current {
    color: #4b4b4b;
}
.track {
    display: flex;
    align-items: center;
    gap: 8px;
    margin: 12px 232px 66px;
}
.dot {
    width: 16px;
    height: 16px;
    border-radius: 50%;
    border: 4px solid #e1e1e1;
}
.dot.done {
    border-color: #8e8e8e;
    background: #8e8e8e;
}
.dot.current {
    border-color: #4b4b4b;
    background: #4b4b4b;
}
.line {
    flex: 1;
    height: 4px;
    padding: 0 14px;
    background:
        linear-gradient(to right, #e1e1e1 12px, transparent 12px) left / 24px 4px repeat-x content-box,
        linear-gradient(#e1e1e1, #e1e1e1) left / 8px 4px no-repeat,
        linear-gradient(#e1e1e1, #e1e1e1) right / 8px 4px no-repeat;
}
.line.done {
    background: #b1b1b1;
}
.platforms {
    display: flex;
    gap: 32px;
    padding: 48px 0 64px;
    margin-bottom: 42px;
    border-bottom: 2px solid #e1e1e1;
}
.platforms label {
    display: flex;
    align-items: center;
    gap: 20px;
}
input[type="radio"] {
    appearance: none;
    width: 28px;
    height: 28px;
    border: 4px solid #8e8e8e;
    border-radius: 50%;
    background: #fafafa;
}
input[type="radio"]:checked {
    border: 10px solid #1473e6;
    background: #fff;
}
.language {
    display: flex;
    align-items: center;
    padding-top: 26px;
}
.locale {
    display: flex;
    align-items: center;
    gap: 54px;
}
.switch {
    appearance: none;
    width: 52px;
    height: 28px;
    border-radius: 14px;
    background: radial-gradient(circle at 38px 14px, #fafafa 10px, #1473e6 11px);
}
.info {
    margin: 0 68px 0 16px;
}
.picker {
    display: grid;
    align-items: center;
    margin-bottom: 8px;
}
.picker > * {
    grid-area: 1 / 1;
}
.picker select {
    appearance: none;
    height: 64px;
    padding: 0 82px 0 25px;
    border: 2px solid #e1e1e1;
    border-radius: 8px;
    background: #fff;
}
.picker svg {
    justify-self: end;
    margin-right: 22px;
    pointer-events: none;
}
.footer {
    padding: 60px 0 36px;
    border-top: 2px solid #e8e8e8;
}
.actions {
    display: flex;
    max-width: 1444px;
    margin: 0 auto;
}
.btn {
    height: 64px;
    padding: 0 28px;
    border: 4px solid;
    border-radius: 32px;
    font-size: 26px;
    font-weight: 700;
}
.previous {
    color: #6e6e6e;
    margin-right: auto;
}
.next {
    margin-left: 38px;
    padding: 0 38px;
    border-color: #1473e6;
    background: #1473e6;
    color: #fff;
}

/* dock */
.dock-area {
    display: flex;
    justify-content: center;
    padding: 14px 0 10px;
    position: relative;
}
.defs {
    position: absolute;
}
.dock {
    display: flex;
    gap: 28px;
    height: 130px;
    padding: 18px;
    border: 2px solid rgba(255, 255, 255, 0.18);
    border-radius: 42px;
    box-shadow: 0 0 80px rgba(0, 0, 0, 0.35);
    background: linear-gradient(8deg, #5b80b8, #7480bc 35%, #8a7ab4 60%, #a975b0 88%, #bd70a6);
}
.app {
    position: relative;
    width: 80px;
    height: 80px;
}
.app svg {
    width: 80px;
    height: 80px;
    overflow: visible;
    filter: drop-shadow(0 1px 2px rgba(0, 0, 0, 0.3));
}
.running::after {
    content: "";
    position: absolute;
    left: 36px;
    top: 98px;
    width: 8px;
    height: 8px;
    border-radius: 50%;
    background: #04043a;
}
.divider {
    width: 2px;
    height: 94px;
    margin: 0 9px;
    background: #6f4a8c;
}
.badge {
    position: absolute;
    top: -10px;
    right: -12px;
    width: 38px;
    height: 38px;
    border-radius: 50%;
    background: #fb4037;
    color: #fff;
    font-size: 22px;
    line-height: 38px;
    text-align: center;
}
.petals rect {
    mix-blend-mode: multiply;
}
.app text {
    font-family: Roboto, sans-serif;
    fill: #fff;
}
.app .shield-text {
    font-size: 11px;
    font-weight: 700;
}
.app .cal-month {
    font-size: 16px;
    font-weight: 700;
}
.app .cal-day {
    font-size: 50px;
    font-weight: 300;
    fill: #222;
}
.app .tv-text {
    font-size: 38px;
    font-weight: 500;
}
.app .word-text {
    font-size: 34px;
    font-weight: 700;
}
```
